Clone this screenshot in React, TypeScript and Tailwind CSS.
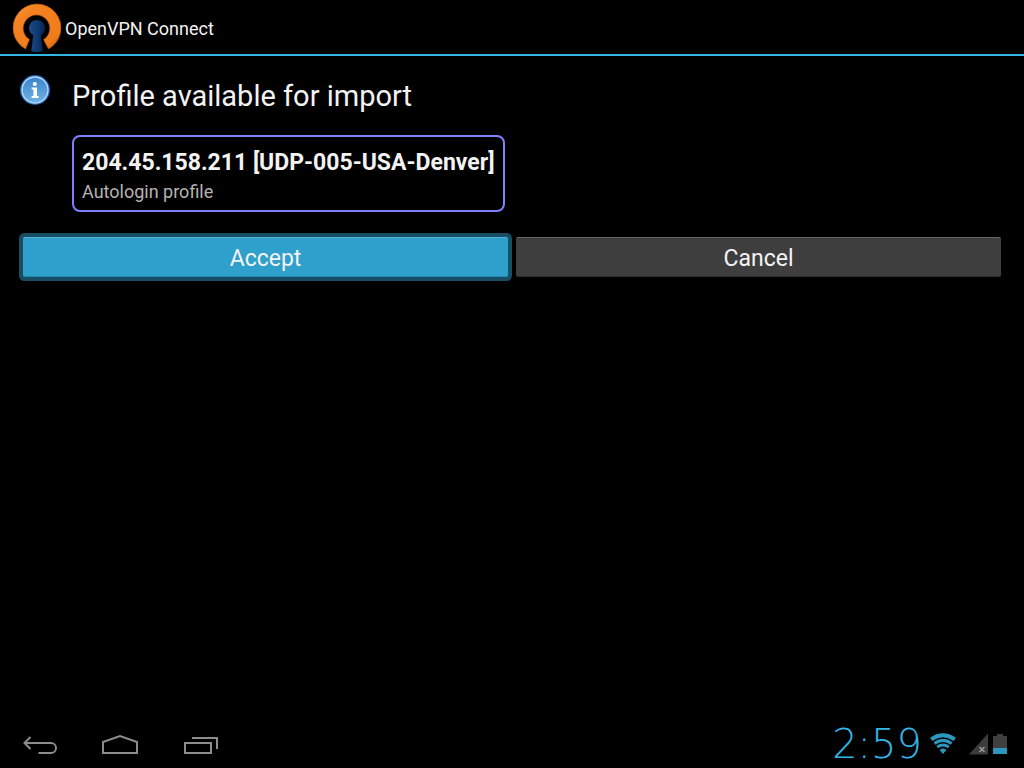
import type { SVGProps } from 'react';

const profile = {
  name: '204.45.158.211 [UDP-005-USA-Denver]',
  kind: 'Autologin profile',
};

const OpenVpnLogo = () => (
  <svg width="48" height="50" viewBox="0 1 48 50" aria-hidden="true">
    <defs>
      <linearGradient id="ring" x1="0" y1="0" x2="1" y2="1">
        <stop offset="0" stopColor="#ffa04c" />
        <stop offset="0.25" stopColor="#f58220" />
        <stop offset="0.8" stopColor="#f07c1c" />
        <stop offset="1" stopColor="#b5520c" />
      </linearGradient>
      <linearGradient id="key" x1="0" y1="0" x2="1" y2="0">
        <stop offset="0" stopColor="#1b4a86" />
        <stop offset="0.5" stopColor="#0f3a73" />
        <stop offset="1" stopColor="#082450" />
      </linearGradient>
    </defs>
    <path
      d="M12.5 48 A24 24 0 1 1 35.5 48 L30.5 38.6 A13.3 13.3 0 1 0 16.5 38.6 Z"
      fill="url(#ring)"
      stroke="#a9500f"
      strokeWidth="0.6"
    />
    <path d="M24 19 a8 8 0 0 1 3.8 15 L29.7 50 Q24 52.5 18.3 50 L20.2 34 A8 8 0 0 1 24 19 Z" fill="url(#key)" />
  </svg>
);

const InfoIcon = () => (
  <svg width="30" height="30" viewBox="0 0 30 30" aria-hidden="true">
    <defs>
      <linearGradient id="info" x1="0" y1="0" x2="0" y2="1">
        <stop offset="0" stopColor="#3b82cb" />
        <stop offset="1" stopColor="#70b3e8" />
      </linearGradient>
    </defs>
    <circle cx="15" cy="15" r="15" fill="#1d5fb5" />
    <circle cx="15" cy="15" r="13" fill="url(#info)" stroke="#b6dbf7" strokeWidth="1.4" />
    <circle cx="14.8" cy="9" r="2.1" fill="#fff" />
    <path d="M11.6 12.4h5.4v8.5h1.6v2h-7v-2h1.8v-6.5h-1.8z" fill="#fff" />
  </svg>
);

const NavIcon = ({ children, ...props }: SVGProps<SVGSVGElement>) => (
  <svg height="24" fill="none" stroke="#8c8c8c" strokeWidth="2" aria-hidden="true" {...props}>
    {children}
  </svg>
);

const WifiIcon = () => (
  <svg width="26" height="22" viewBox="0 0 26 22" fill="none" stroke="#2d96bf" aria-hidden="true">
    <path d="M1.2 6.4 Q13 -1.8 24.8 6.4" strokeWidth="4" />
    <path d="M4.4 10.4 Q13 4.4 21.6 10.4" strokeWidth="3" />
    <path d="M7.2 14 Q13 10 18.8 14" strokeWidth="2.8" />
    <path d="M9.6 17 Q13 14.2 16.4 17 L13 21 Z" fill="#2d96bf" stroke="none" />
  </svg>
);

const SignalIcon = () => (
  <svg width="20" height="22" viewBox="0 0 20 22" aria-hidden="true">
    <path d="M0 21.5 L19 0.5 V21.5 Z" fill="#3c3c3c" />
    <path d="M10.5 14 l5 5 m0 -5 l-5 5" stroke="#9a9a9a" strokeWidth="1.5" />
  </svg>
);

const BatteryIcon = () => (
  <svg width="14" height="22" viewBox="0 0 14 22" aria-hidden="true">
    <path d="M4 1h6v2h4v18H0V3h4z" fill="#3f3f3f" />
    <path d="M0 15h14v6H0z" fill="#2d96bf" />
  </svg>
);

const App = () => {
  return (
    <div className="min-h-screen flex flex-col bg-black text-[#f3f3f3] font-[Roboto,sans-serif]">
      <header className="h-14 flex items-center gap-1 pl-[13px] border-b-2 border-[#33b5e5]">
        <OpenVpnLogo />
        <h1 className="pt-1 text-lg">OpenVPN Connect</h1>
      </header>

      <main className="flex-1 px-5 pt-[19px]">
        <div className="flex items-start gap-[22px]">
          <InfoIcon />
          <section className="min-w-0">
            <h2 className="text-[29px] leading-[42px]">Profile available for import</h2>
            <div className="mt-[18px] w-fit rounded-lg border-2 border-[#8080ff] px-2 py-2">
              <p className="text-[23px] leading-9 font-bold">{profile.name}</p>
              <p className="text-lg leading-[21px] text-[#b4b4b4]">{profile.kind}</p>
            </div>
          </section>
        </div>

        <div className="mt-[25px] flex gap-2 px-[3px]">
          <button
            type="button"
            className="flex-1 h-10 pt-1 bg-[#2f9fcb] border-t border-b border-t-[#58b2d6] border-b-[#2789b0] ring-4 ring-[#174e63] rounded-xs text-[23px]"
          >
            Accept
          </button>
          <button
            type="button"
            className="flex-1 h-10 pt-1 bg-[#3e3e3e] border-t border-b border-t-[#646464] border-b-[#2c2c2c] rounded-xs text-[23px]"
          >
            Cancel
          </button>
        </div>
      </main>

      <footer className="h-12 flex items-center justify-between pl-[22px] pr-[17px]">
        <nav className="flex items-center gap-11">
          <button type="button" aria-label="Back">
            <NavIcon width="36" viewBox="0 0 36 24">
              <path d="M2.5 11 H29 a5 5 0 0 1 0 10 H16.5 M8.5 5 L2.5 11 L8.5 17" />
            </NavIcon>
          </button>
          <button type="button" aria-label="Home">
            <NavIcon width="36" viewBox="0 0 36 24">
              <path d="M1 21 V10 L18 4 L35 10 V21 Z" />
            </NavIcon>
          </button>
          <button type="button" aria-label="Recent apps">
            <NavIcon width="36" viewBox="0 0 36 24">
              <path d="M3 11 H29 V21 H3 Z M10 6 H35 V17" />
            </NavIcon>
          </button>
        </nav>
        <div className="flex items-center">
          <time className="mr-2 text-[40px] leading-12 font-extralight text-[#33b5e5] font-[DejaVu_Sans,sans-serif]">
            2:59
          </time>
          <WifiIcon />
          <span className="ml-[13px] flex items-center gap-1">
            <SignalIcon />
            <BatteryIcon />
          </span>
        </div>
      </footer>
    </div>
  );
};

export default App;
